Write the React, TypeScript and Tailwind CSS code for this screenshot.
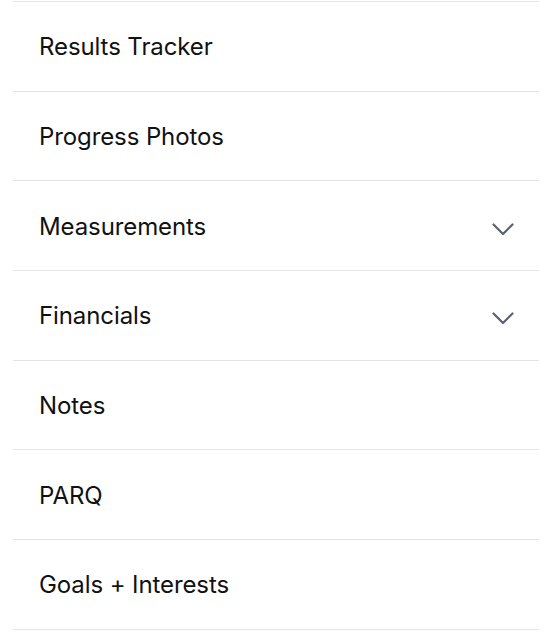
const ITEMS: { label: string; expandable?: boolean }[] = [
  { label: "Results Tracker" },
  { label: "Progress Photos" },
  { label: "Measurements", expandable: true },
  { label: "Financials", expandable: true },
  { label: "Notes" },
  { label: "PARQ" },
  { label: "Goals + Interests" },
];

function Chevron() {
  return (
    <svg width="22" height="13" viewBox="0 0 22 13" fill="none" className="mt-[7px] text-[#5b6170]">
      <polyline
        points="1.5,1.5 11,11 20.5,1.5"
        stroke="currentColor"
        strokeWidth="2.2"
        strokeLinecap="round"
        strokeLinejoin="round"
      />
    </svg>
  );
}

export default function App() {
  return (
    <div className="min-h-screen bg-white pt-px" style={{ fontFamily: "Inter, 'Noto Sans', sans-serif" }}>
      <ul className="ml-[13px] mr-[17px] border-b border-[#e2e3e6]">
        {ITEMS.map((item) => (
          <li
            key={item.label}
            className="flex h-[89.7px] items-center justify-between border-t border-[#e2e3e6] pl-[26px] pr-[25px]"
          >
            <span className="pt-[2px] text-[24px] leading-none tracking-[-0.1px] text-[#111111]">{item.label}</span>
            {item.expandable && <Chevron />}
          </li>
        ))}
      </ul>
    </div>
  );
}
